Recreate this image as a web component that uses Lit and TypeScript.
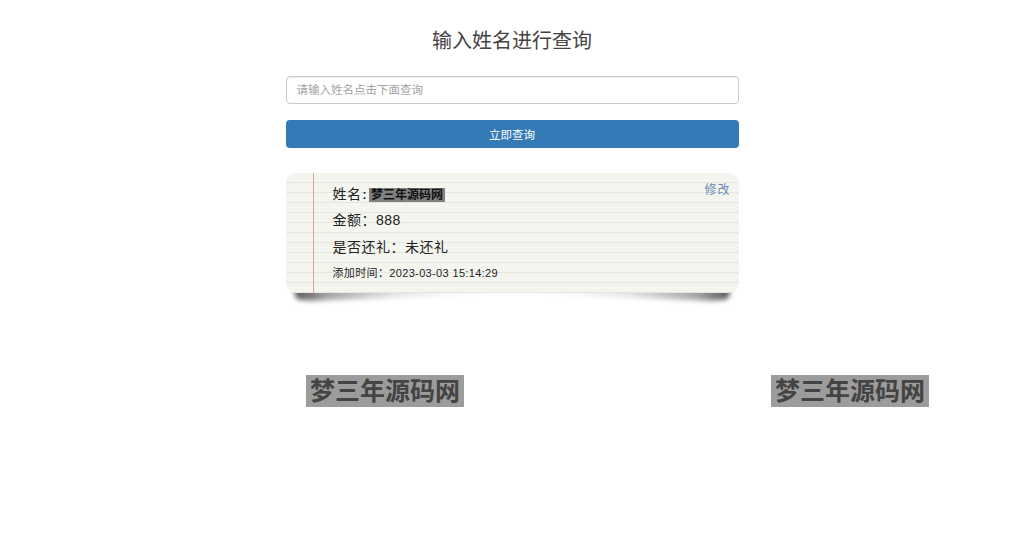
import { LitElement, html, css } from "lit";
import { customElement } from "lit/decorators.js";

@customElement("app-root")
export class AppRoot extends LitElement {
  static styles = css`
    :host {
      display: block;
      position: relative;
      height: 548px;
      overflow: hidden;
      background: #fff;
      font-family: "Liberation Sans", "Noto Sans CJK SC", sans-serif;
      color: #333;
    }
    .wrap {
      width: 453px;
      margin: 0 auto;
      padding-top: 27px;
      display: flex;
      flex-direction: column;
    }
    h1 {
      margin: 0;
      font-weight: 400;
      font-size: 20px;
      line-height: 28px;
      text-align: center;
      color: #444;
    }
    .input {
      margin-top: 21px;
      height: 28px;
      box-sizing: border-box;
      border: 1px solid #ccc;
      border-radius: 4px;
      padding: 0 10px 2px;
      display: flex;
      align-items: center;
      font-size: 11.5px;
      color: #a3a3a3;
      box-shadow: inset 0 1px 1px rgba(0, 0, 0, 0.075);
    }
    .btn {
      margin-top: 16px;
      height: 28px;
      box-sizing: border-box;
      padding-bottom: 1px;
      border-radius: 4px;
      background: #337ab7;
      color: #fff;
      font-size: 11.5px;
      display: flex;
      align-items: center;
      justify-content: center;
    }
    .stack {
      position: relative;
      z-index: 0;
      margin-top: 25px;
    }
    .card {
      position: relative;
      height: 120px;
      box-sizing: border-box;
      padding: 8px 0 0 47px;
      border-radius: 10px;
      background-color: #f5f5f0;
      background-image: repeating-linear-gradient(
        to bottom,
        transparent 0,
        transparent 9px,
        #e6e6e0 9px,
        #e6e6e0 10px
      );
      color: #222;
      font-size: 14px;
    }
    .card::before {
      content: "";
      position: absolute;
      left: 27px;
      top: 0;
      bottom: 0;
      width: 1px;
      background: #e0a0a0;
    }
    .shadow-l,
    .shadow-r {
      position: absolute;
      z-index: -1;
      top: 108px;
      width: 50%;
      height: 22px;
      filter: blur(2.5px);
    }
    .shadow-l { left: 9px; }
    .shadow-r { right: 9px; }
    .shadow-l::before,
    .shadow-r::before {
      content: "";
      position: absolute;
      inset: 0;
    }
    .shadow-l::before {
      background: linear-gradient(to right, rgba(0,0,0,0.65), rgba(0,0,0,0.35) 15%, rgba(0,0,0,0.1) 45%, transparent 85%);
      clip-path: polygon(0 0, 100% 0, 100% 52%, 8% 90%, 2% 85%, 0 70%);
    }
    .shadow-r::before {
      background: linear-gradient(to left, rgba(0,0,0,0.65), rgba(0,0,0,0.35) 15%, rgba(0,0,0,0.1) 45%, transparent 85%);
      clip-path: polygon(0 0, 100% 0, 100% 70%, 98% 85%, 92% 90%, 0 52%);
    }
    .row {
      height: 26.3px;
      line-height: 26px;
      white-space: nowrap;
      letter-spacing: 0.5px;
    }
    .row.sm {
      font-size: 11px;
      letter-spacing: 0.35px;
    }
    .colon {
      font-weight: 700;
      font-size: 12px;
      margin: 0 2px 0 1px;
    }
    .mark {
      display: inline-block;
      height: 14px;
      line-height: 14px;
      vertical-align: 0;
      padding: 0 2px;
      background: #808080;
      font-weight: 700;
      color: #111;
      font-size: 12px;
      letter-spacing: 0;
    }
    .edit {
      position: absolute;
      top: 7px;
      right: 8px;
      font-size: 12px;
      letter-spacing: 1px;
      color: #6a8ab4;
    }
    .wm {
      position: absolute;
      top: 375px;
      width: 158px;
      height: 32px;
      box-sizing: border-box;
      background: #9c9c9c;
      color: #444;
      font-weight: 700;
      font-size: 25px;
      line-height: 32px;
      text-align: center;
      white-space: nowrap;
    }
    .wm.a { left: 306px; }
    .wm.b { left: 771px; }
  `;

  render() {
    return html`
      <div class="wrap">
        <h1>输入姓名进行查询</h1>
        <div class="input">请输入姓名点击下面查询</div>
        <div class="btn">立即查询</div>
        <div class="stack">
          <div class="shadow-l"></div>
          <div class="shadow-r"></div>
          <div class="card">
            <div class="row">姓名<span class="colon">:</span><span class="mark">梦三年源码网</span></div>
            <div class="row">金额：888</div>
            <div class="row">是否还礼：未还礼</div>
            <div class="row sm">添加时间：2023-03-03 15:14:29</div>
            <div class="edit">修改</div>
          </div>
        </div>
      </div>
      <div class="wm a">梦三年源码网</div>
      <div class="wm b">梦三年源码网</div>
    `;
  }
}
